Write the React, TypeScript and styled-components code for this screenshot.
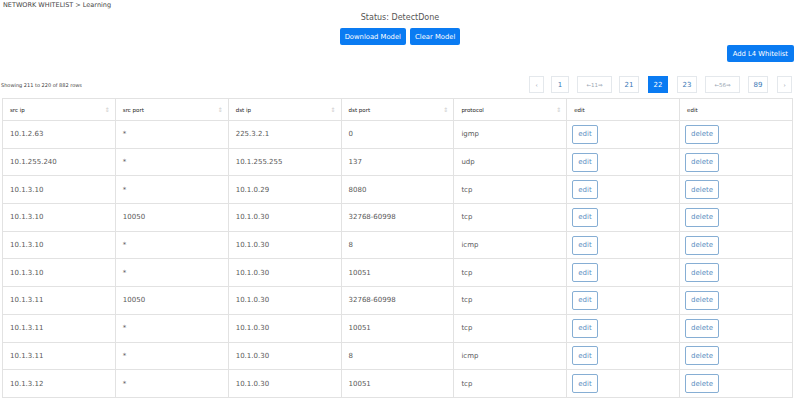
import React from "react";
import styled, { createGlobalStyle } from "styled-components";

const Global = createGlobalStyle`
  html, body { margin: 0; padding: 0; background: #fff; }
  body { font-family: "DejaVu Sans", Verdana, sans-serif; color: #333; }
  * { box-sizing: border-box; }
`;

const Page = styled.div`
  width: 800px;
  height: 399px;
  overflow: hidden;
  display: flex;
  flex-direction: column;
`;

const Breadcrumb = styled.div`
  font-size: 6.5px;
  line-height: 10px;
  padding-left: 3px;
  color: #444;
`;

const Status = styled.div`
  text-align: center;
  font-size: 8px;
  line-height: 10px;
  margin-top: 3px;
  color: #555;
`;

const ButtonRow = styled.div`
  display: flex;
  justify-content: center;
  gap: 4px;
  margin-top: 5px;
`;

const PrimaryButton = styled.button<{ $px?: number }>`
  font-family: inherit;
  font-size: 6.8px;
  height: 17px;
  padding: 0 ${(p) => p.$px ?? 5}px;
  background: #0a7bf2;
  color: #fff;
  border: none;
  border-radius: 2px;
  cursor: pointer;
`;

const ToolRow = styled.div`
  display: flex;
  justify-content: flex-end;
  padding-right: 6px;
`;

const PagerRow = styled.div`
  display: flex;
  align-items: center;
  justify-content: space-between;
  margin-top: 14px;
  height: 17px;
  padding-right: 8px;
`;

const Showing = styled.div`
  font-size: 5px;
  color: #444;
  padding-left: 1px;
  margin-top: 1px;
`;

const Pager = styled.div`
  display: flex;
  align-items: center;
`;

const PageBtn = styled.div<{ $active?: boolean; $w: number; $gap: number; $muted?: boolean }>`
  width: ${(p) => p.$w}px;
  height: 17px;
  margin-left: ${(p) => p.$gap}px;
  display: flex;
  align-items: center;
  justify-content: center;
  font-size: ${(p) => (p.$muted ? 5.5 : 7)}px;
  color: ${(p) => (p.$active ? "#fff" : p.$muted ? "#9aa6b2" : "#3a78b5")};
  background: ${(p) => (p.$active ? "#0a7bf2" : "#fff")};
  border: 1px solid ${(p) => (p.$active ? "#0a7bf2" : "#e4e8ec")};
`;

const Table = styled.table`
  margin: 5px 0 0 2px;
  width: 791px;
  border-collapse: collapse;
  table-layout: fixed;
  font-size: 7px;
`;

const Th = styled.th`
  text-align: left;
  font-weight: normal;
  font-size: 5.5px;
  color: #222;
  height: 22px;
  padding: 0 7px;
  border: 1px solid #e2e2e2;
  position: relative;
`;

const SortIcon = styled.span`
  position: absolute;
  right: 5px;
  top: 50%;
  transform: translateY(-50%);
  font-size: 6px;
  color: #ccc;
  line-height: 1;
`;

const Td = styled.td`
  height: 27.7px;
  padding: 0 7px;
  color: #5a5a5a;
  border: 1px solid #e2e2e2;
  white-space: nowrap;
`;

const OutlineBtn = styled.button`
  font-family: inherit;
  font-size: 7px;
  height: 19px;
  padding: 0 5px;
  background: #fff;
  color: #5b8fc2;
  border: 1px solid #86aed4;
  border-radius: 2px;
  margin-left: -2px;
`;

const rows = [
  ["10.1.2.63", "*", "225.3.2.1", "0", "igmp"],
  ["10.1.255.240", "*", "10.1.255.255", "137", "udp"],
  ["10.1.3.10", "*", "10.1.0.29", "8080", "tcp"],
  ["10.1.3.10", "10050", "10.1.0.30", "32768-60998", "tcp"],
  ["10.1.3.10", "*", "10.1.0.30", "8", "icmp"],
  ["10.1.3.10", "*", "10.1.0.30", "10051", "tcp"],
  ["10.1.3.11", "10050", "10.1.0.30", "32768-60998", "tcp"],
  ["10.1.3.11", "*", "10.1.0.30", "10051", "tcp"],
  ["10.1.3.11", "*", "10.1.0.30", "8", "icmp"],
  ["10.1.3.12", "*", "10.1.0.30", "10051", "tcp"],
];

const headers = ["src ip", "src port", "dst ip", "dst port", "protocol"];

const pages: { label: string; w: number; gap: number; active?: boolean; muted?: boolean }[] = [
  { label: "‹", w: 15, gap: 0, muted: true },
  { label: "1", w: 18, gap: 7 },
  { label: "←11⇒", w: 35, gap: 8, muted: true },
  { label: "21", w: 20, gap: 7 },
  { label: "22", w: 20, gap: 9, active: true },
  { label: "23", w: 20, gap: 9 },
  { label: "←56⇒", w: 35, gap: 8, muted: true },
  { label: "89", w: 20, gap: 8 },
  { label: "›", w: 15, gap: 9, muted: true },
];

export default function App() {
  return (
    <Page>
      <Global />
      <Breadcrumb>NETWORK WHITELIST &gt; Learning</Breadcrumb>
      <Status>Status: DetectDone</Status>
      <ButtonRow>
        <PrimaryButton>Download Model</PrimaryButton>
        <PrimaryButton>Clear Model</PrimaryButton>
      </ButtonRow>
      <ToolRow>
        <PrimaryButton $px={6}>Add L4 Whitelist</PrimaryButton>
      </ToolRow>
      <PagerRow>
        <Showing>Showing 211 to 220 of 882 rows</Showing>
        <Pager>
          {pages.map((p, i) => (
            <PageBtn key={i} $w={p.w} $gap={p.gap} $active={p.active} $muted={p.muted}>
              {p.label}
            </PageBtn>
          ))}
        </Pager>
      </PagerRow>
      <Table>
        <thead>
          <tr>
            {headers.map((h) => (
              <Th key={h}>
                {h}
                <SortIcon>⇕</SortIcon>
              </Th>
            ))}
            <Th>edit</Th>
            <Th>edit</Th>
          </tr>
        </thead>
        <tbody>
          {rows.map((r, i) => (
            <tr key={i}>
              {r.map((c, j) => (
                <Td key={j}>{c}</Td>
              ))}
              <Td>
                <OutlineBtn>edit</OutlineBtn>
              </Td>
              <Td>
                <OutlineBtn>delete</OutlineBtn>
              </Td>
            </tr>
          ))}
        </tbody>
      </Table>
    </Page>
  );
}
